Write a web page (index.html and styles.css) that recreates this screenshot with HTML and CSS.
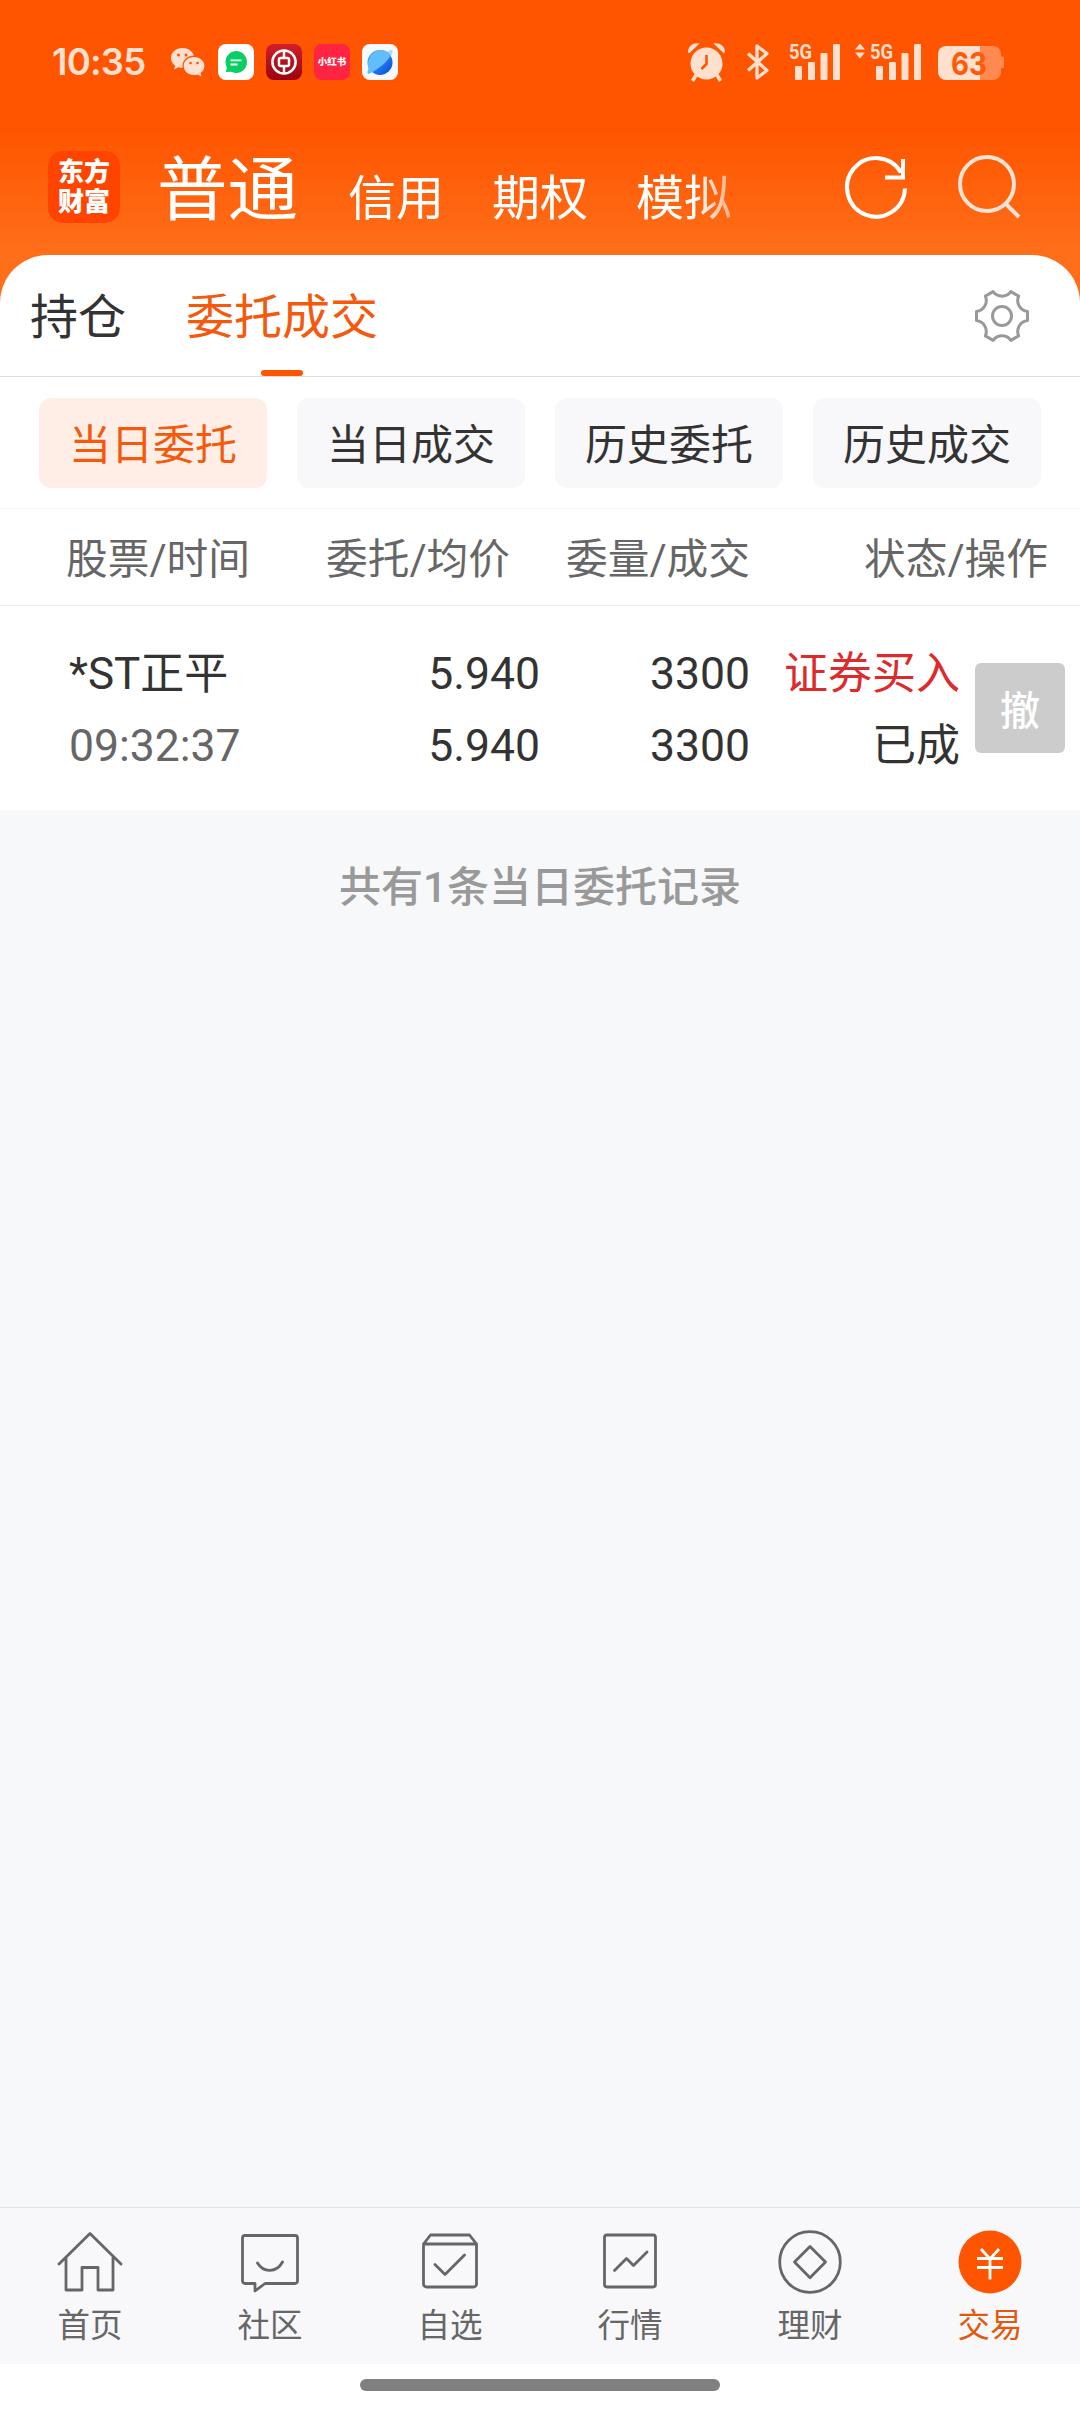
FILE: index.html
```html
<!DOCTYPE html>
<html lang="zh-CN">
<head>
  <meta charset="UTF-8" />
  <meta name="viewport" content="width=device-width, initial-scale=1" />
  <title>委托成交</title>
  <link rel="stylesheet" href="styles.css">
</head>
<body>

  <div class="top">
    <div class="status">
      <span class="time">10:35</span>
      <svg class="wechat" width="36" height="30" viewBox="0 0 36 30" fill="#ffdfce">
        <path d="M12.500 1C5.600 1 1 5.500 1 11c0 3.200 1.600 5.900 4.200 7.700L4 22.500l4.500-2.300c1.300.4 2.700.6 4 .6C11.800 13.500 17 8.700 24 8.600 22.500 4 18 1 12.500 1z"/>
        <path d="M24 10c-6 0-10.300 4-10.300 9s4.300 9 10.300 9c1.300 0 2.500-.2 3.600-.6l3.900 2.100-.9-3.600c2.400-1.600 3.800-4.100 3.800-6.900 0-5-4.400-9-10.400-9z"/>
        <g fill="#ff5500"><circle cx="8.500" cy="8" r="1.500"/><circle cx="16" cy="8" r="1.500"/><circle cx="20.500" cy="16" r="1.300"/><circle cx="27.500" cy="16" r="1.300"/></g>
      </svg>
      <svg class="app" width="36" height="36" viewBox="0 0 36 36">
        <rect width="36" height="36" rx="8" fill="#fff"/>
        <path d="M18 7a11 11 0 1 1-5 20.800L8 28l.8-4.800A11 11 0 0 1 18 7z" fill="#07cf62"/>
        <path d="M12.500 16.300h11M12.500 20.500h7" stroke="#fff" stroke-width="1.800"/>
      </svg>
      <svg class="app" width="36" height="36" viewBox="0 0 36 36">
        <defs><linearGradient id="boc" x2="0" y2="1"><stop stop-color="#d21e2b"/><stop offset="1" stop-color="#9c0310"/></linearGradient></defs>
        <rect width="36" height="36" rx="8" fill="url(#boc)"/>
        <g fill="none" stroke="#fff" stroke-width="2.500"><circle cx="18" cy="18" r="11.600"/><rect x="13" y="14" width="10" height="8" rx="1.500"/><path d="M18 6v8M18 22v8"/></g>
      </svg>
      <span class="app red-book">小红书</span>
      <svg class="app" width="36" height="36" viewBox="0 0 36 36">
        <defs><linearGradient id="planet" x2="1" y2="1"><stop stop-color="#48b2ff"/><stop offset="1" stop-color="#0745dc"/></linearGradient></defs>
        <rect width="36" height="36" rx="8" fill="#f6f8fc"/>
        <path d="M25 8c4-3 6.500-2.500 5.500.5-1 2.500-2.500 4.500-4.500 7z" fill="#a9dcff"/>
        <circle cx="18" cy="18.500" r="12.500" fill="url(#planet)"/>
        <path d="M29 11C25 18 18 24 9.500 28.500 6 31 4 29.500 6.500 25 4 17 10 7 18 6c4.500-.3 8 1.500 11 5z" fill="#62bdfb"/>
      </svg>

      <svg class="sys" width="320" height="58" viewBox="0 -8 320 58" fill="#ffdfce">
        <g>
          <circle cx="21.500" cy="22.500" r="16"/>
          <path d="M3 11.500C3 5 8 1.500 14.500 2.500L4.500 12zM40 11.500C40 5 35 1.500 28.500 2.500L38.500 12z"/>
          <path d="M11 34l-3.500 6M32 34l3.500 6" stroke="#ffdfce" stroke-width="3.500"/>
          <path d="M21.500 14v9l-5 5" fill="none" stroke="#ff5500" stroke-width="2.600"/>
        </g>
        <path d="M63 12.500l19 17L72 37V5l10 7.500-19 17" fill="none" stroke="#ffdfce" stroke-width="3.300" stroke-linejoin="round"/>
        <text class="net" x="104" y="17.500" textLength="23" lengthAdjust="spacingAndGlyphs">5G</text>
        <g><rect x="110" y="25" width="7" height="14" rx="1"/><rect x="123" y="21" width="7" height="18" rx="1"/><rect x="135.500" y="12" width="7" height="27" rx="1"/><rect x="148" y="3" width="7" height="36" rx="1"/></g>
        <path d="M170 8.500l5-6 5 6zM170 11.500h10l-5 6z"/>
        <text class="net" x="185" y="17.500" textLength="23" lengthAdjust="spacingAndGlyphs">5G</text>
        <g><rect x="191" y="25" width="7" height="14" rx="1"/><rect x="204" y="21" width="7" height="18" rx="1"/><rect x="216.500" y="12" width="7" height="27" rx="1"/><rect x="229" y="3" width="7" height="36" rx="1"/></g>
        <path d="M295 5h13a8 8 0 0 1 8 8v2.500h1.500a1.500 1.500 0 0 1 1.500 1.500v8.500a1.500 1.500 0 0 1-1.500 1.500H316v4a8 8 0 0 1-8 8h-13z" fill="#ff8a50"/>
        <path d="M261 5h34v34h-34a8 8 0 0 1-8-8V13a8 8 0 0 1 8-8z"/>
        <text class="level" x="266" y="33.500" textLength="36" lengthAdjust="spacingAndGlyphs">63</text>
      </svg>
    </div>

    <div class="header">
      <div class="logo">东方<br>财富</div>
      <div class="accounts">
        <span class="current">普通</span>
        <span>信用</span>
        <span>期权</span>
        <span>模拟</span>
      </div>
      <svg width="190" height="72" viewBox="0 0 190 72" fill="none" stroke="#fff" stroke-width="4">
        <path d="M65 37.500a29 29.300 0 1 1-4-16"/>
        <path d="M63 8v18.500H45"/>
        <g stroke="#ffe3d5"><circle cx="147" cy="33" r="27"/><path d="M165.500 52.500L179 66"/></g>
      </svg>
    </div>
  </div>

  <div class="sheet">
    <div class="tabs">
      <span class="tab">持仓</span>
      <span class="tab active">委托成交</span>
      <svg class="gear" width="60" height="60" viewBox="-30 -30 60 60" fill="none" stroke="#999" stroke-width="3" stroke-linejoin="round">
        <path d="M25.500-4.500V4.500A11 11 0 0 0 16.650 19.830L8.850 24.330A11 11 0 0 0-8.850 24.330L-16.650 19.830A11 11 0 0 0-25.500 4.500V-4.500A11 11 0 0 0-16.650-19.830L-8.850-24.330A11 11 0 0 0 8.850-24.330L16.650-19.830A11 11 0 0 0 25.500-4.500z"/>
        <circle r="9.500"/>
      </svg>
    </div>

    <div class="filters">
      <span class="chip active">当日委托</span>
      <span class="chip">当日成交</span>
      <span class="chip">历史委托</span>
      <span class="chip">历史成交</span>
    </div>

    <div class="list-head">
      <span>股票/时间</span>
      <span>委托/均价</span>
      <span>委量/成交</span>
      <span>状态/操作</span>
    </div>

    <div class="order">
      <div class="cell"><span>*ST正平</span><span class="grey">09:32:37</span></div>
      <div class="cell"><span>5.940</span><span>5.940</span></div>
      <div class="cell"><span>3300</span><span>3300</span></div>
      <div class="cell"><span class="buy">证券买入</span><span>已成</span></div>
      <button class="cancel" type="button">撤</button>
    </div>
  </div>

  <p class="summary">共有1条当日委托记录</p>

  <div class="nav">
    <div class="item">
      <svg width="70" height="70" viewBox="0 0 70 70">
        <path d="M4 35L35 4.500 66 35M11 29v32h16V38.500h16V61h15V29"/>
      </svg>
      首页
    </div>
    <div class="item">
      <svg width="70" height="70" viewBox="0 0 70 70">
        <path d="M10 6.500h50a2.500 2.500 0 0 1 2.500 2.500v43a2.500 2.500 0 0 1-2.500 2.500H30L20 62V54.500H10A2.500 2.500 0 0 1 7.500 52V9A2.500 2.500 0 0 1 10 6.500zM22.500 34c6 10 19 10 25-1"/>
      </svg>
      社区
    </div>
    <div class="item">
      <svg width="70" height="70" viewBox="0 0 70 70">
        <path d="M8.500 15L15.500 6h39L61.500 15v40a3 3 0 0 1-3 3h-47a3 3 0 0 1-3-3zM8.500 15h53M20 35.500L30 45.500 49.500 26"/>
      </svg>
      自选
    </div>
    <div class="item">
      <svg width="70" height="70" viewBox="0 0 70 70">
        <rect x="9.500" y="6" width="51" height="52" rx="2.500"/>
        <path d="M19.500 41.500L31.500 29.500l7 7L52 23"/>
      </svg>
      行情
    </div>
    <div class="item">
      <svg width="70" height="70" viewBox="0 0 70 70">
        <circle cx="35" cy="33" r="30.300"/>
        <path d="M35 17.500L50.500 33 35 48.800 19.500 33z"/>
      </svg>
      理财
    </div>
    <div class="item active">
      <svg width="70" height="70" viewBox="0 0 70 70">
        <circle class="disc" cx="35" cy="33" r="31.500"/>
        <path class="yen" d="M26 20l9 10 9-10M35 29v21.500M22 29.500h26M22 38.500h26"/>
      </svg>
      交易
    </div>
  </div>
  <div class="gesture"><span></span></div>

</body>
</html>
```
FILE: styles.css
```css
* {
  box-sizing: border-box;
}

body {
  margin: 0;
  width: 1080px;
  height: 2412px;
  display: flex;
  flex-direction: column;
  font-family: Roboto, "Noto Sans CJK SC", sans-serif;
  color: #333;
  background-color: #f7f8fa;
  overflow: hidden;
}

svg {
  display: block;
  flex: none;
}

.top {
  height: 305px;
  background: linear-gradient(#ff5500 130px, #ff6f1a 255px);
}

/* status bar */
.status {
  height: 122px;
  display: flex;
  align-items: center;
  padding: 2px 75px 0 52px;
}

.time {
  width: 118px;
  font-family: Inter, sans-serif;
  font-size: 36.5px;
  font-weight: 600;
  line-height: 44px;
  letter-spacing: -0.8px;
  color: #ffdfce;
}

.app {
  margin-left: 12px;
}

.red-book {
  width: 36px;
  height: 36px;
  border-radius: 8px;
  background-color: #ff2442;
  color: #fff;
  font-size: 9.5px;
  font-weight: 900;
  line-height: 36px;
  text-align: center;
}

.sys {
  margin-left: auto;
}

.net {
  font: 700 21px Roboto, sans-serif;
}

.level {
  font: 700 31px Inter, sans-serif;
  fill: #ff5a0a;
}

/* header */
.header {
  display: flex;
  padding: 29px 20px 0 48px;
  color: #fff;
}

.logo {
  flex: none;
  width: 72px;
  height: 72px;
  border-radius: 15px;
  background-color: #ff4400;
  font-size: 26px;
  font-weight: 900;
  line-height: 30px;
  padding-top: 6px;
  text-align: center;
}

.accounts {
  display: flex;
  align-items: baseline;
  flex: none;
  width: 610px;
  padding: 4px 0 0 37px;
  font-size: 48px;
  line-height: 72px;
  white-space: nowrap;
  -webkit-mask-image: linear-gradient(90deg, #000 575px, transparent 645px);
  mask-image: linear-gradient(90deg, #000 575px, transparent 645px);
}

.accounts span {
  margin-right: 48px;
}

.accounts .current {
  font-size: 70.5px;
  margin-right: 50px;
}

.header svg {
  margin-left: 110px;
}

/* white sheet */
.sheet {
  margin-top: -50px;
  height: 555px;
  border-radius: 48px 48px 0 0;
  background-color: #fff;
}

.tabs {
  display: flex;
  align-items: center;
  height: 122px;
  padding: 0 48px 0 30px;
  border-bottom: 1px solid #ddd;
  font-size: 48px;
}

.tab {
  position: relative;
  margin-right: 60px;
  padding-top: 5px;
  line-height: 116px;
}

.tab.active {
  color: #f4590c;
}

.tab.active::after {
  content: "";
  position: absolute;
  left: 75px;
  bottom: 0;
  width: 42px;
  height: 6px;
  border-radius: 3px;
  background-color: #ff5500;
}

.gear {
  margin-left: auto;
}

.filters {
  display: flex;
  gap: 30px;
  height: 132px;
  padding: 21px 39px;
  border-bottom: 1px solid #f6f6f6;
}

.chip {
  width: 228px;
  height: 90px;
  border-radius: 12px;
  background-color: #f8f8fa;
  font-size: 42px;
  line-height: 95px;
  text-align: center;
}

.chip.active {
  background-color: #ffeee6;
  color: #f4590c;
}

.list-head {
  display: grid;
  grid-template-columns: 250px 260px 240px 1fr;
  height: 97px;
  padding-right: 32px;
  border-bottom: 1px solid #eee;
  font-size: 41.7px;
  line-height: 101px;
  text-align: right;
  color: #666;
}

.order {
  display: grid;
  grid-template-columns: 271px 201px 210px 210px 90px;
  align-items: center;
  height: 204px;
  padding-left: 68px;
  font-size: 44.5px;
}

.cell {
  display: flex;
  flex-direction: column;
  padding-top: 4px;
  text-align: right;
  line-height: 72px;
}

.cell:first-child {
  padding-left: 1px;
  text-align: left;
}

.cell span {
  height: 72px;
}

.cell:first-child,
.cell:nth-child(4) {
  font-size: 44px;
}

.cell .grey {
  font-size: 44.5px;
  color: #666;
}

.buy {
  color: #dd2a2a;
}

.cancel {
  width: 90px;
  height: 90px;
  margin-left: 15px;
  padding: 0;
  border: none;
  border-radius: 6px;
  background-color: #ccc;
  color: #fff;
  font-family: inherit;
  font-size: 40px;
  font-weight: 500;
}

.summary {
  margin: 0;
  padding-top: 47px;
  font-size: 42px;
  font-weight: 500;
  line-height: 62px;
  text-align: center;
  color: #999;
}

/* bottom navigation */
.nav {
  display: flex;
  height: 157px;
  margin-top: auto;
  border-top: 1px solid #e2e2e4;
  background-color: #f8f8fb;
}

.item {
  width: 180px;
  display: flex;
  flex-direction: column;
  align-items: center;
  padding-top: 21px;
  font-size: 32.5px;
  line-height: 54px;
  color: #666;
}

.item svg {
  fill: none;
  stroke: #666;
  stroke-width: 2.8;
  stroke-linecap: round;
  stroke-linejoin: round;
}

.item.active {
  color: #e2590f;
}

.item .disc {
  fill: #ff5500;
  stroke: none;
}

.item .yen {
  stroke: #fff;
  stroke-linecap: butt;
}

.gesture {
  display: flex;
  justify-content: center;
  height: 48px;
  padding-top: 15px;
  background-color: #fff;
}

.gesture span {
  width: 360px;
  height: 12px;
  border-radius: 6px;
  background-color: #808080;
}
```
